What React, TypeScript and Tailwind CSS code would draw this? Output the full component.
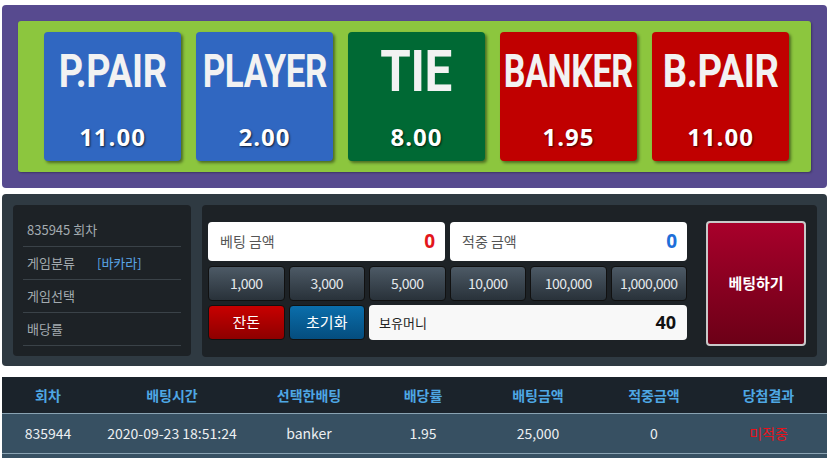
import React from "react";

type Bet = {
  name: string;
  odds: string;
  bg: string;
  size: string;
  squeeze: string;
};

const bets: Bet[] = [
  { name: "P.PAIR", odds: "11.00", bg: "bg-[#3067c1]", size: "text-[46px]", squeeze: "scale-x-[0.82]" },
  { name: "PLAYER", odds: "2.00", bg: "bg-[#3067c1]", size: "text-[46px]", squeeze: "scale-x-[0.76]" },
  { name: "TIE", odds: "8.00", bg: "bg-[#006934]", size: "text-[58px]", squeeze: "scale-x-[0.85]" },
  { name: "BANKER", odds: "1.95", bg: "bg-[#c00000]", size: "text-[46px]", squeeze: "scale-x-[0.74]" },
  { name: "B.PAIR", odds: "11.00", bg: "bg-[#c00000]", size: "text-[46px]", squeeze: "scale-x-[0.83]" },
];

const chips = ["1,000", "3,000", "5,000", "10,000", "100,000", "1,000,000"];

const infoRows: { label: string; value?: string }[] = [
  { label: "835945 회차" },
  { label: "게임분류", value: "[바카라]" },
  { label: "게임선택" },
  { label: "배당률" },
];

const headers = ["회차", "배팅시간", "선택한배팅", "배당률", "배팅금액", "적중금액", "당첨결과"];

const kr = "font-['Noto_Sans_CJK_KR','Noto_Sans',sans-serif]";

function BetCard({ bet }: { bet: Bet }) {
  return (
    <button
      type="button"
      className={`${bet.bg} flex h-[129px] w-[137px] flex-col items-center rounded-[4px] shadow-[2px_2px_3px_rgba(0,0,0,0.45)]`}
    >
      <div className="mt-[2px] flex h-[74px] items-center justify-center">
        <span
          className={`inline-block ${bet.squeeze} ${bet.size} font-['Roboto',sans-serif] font-bold leading-none tracking-[-0.5px] text-[#f2f2f2]`}
        >
          {bet.name}
        </span>
      </div>
      <span className="mt-[17px] font-['Open_Sans',sans-serif] text-[24px] font-bold leading-none tracking-[1px] text-white [text-shadow:1px_1px_2px_rgba(0,0,0,0.7)]">
        {bet.odds}
      </span>
    </button>
  );
}

export default function App() {
  return (
    <div className={`min-h-[458px] bg-white pt-[5px] ${kr}`}>
      {/* bet choices */}
      <div className="ml-[2px] w-[825px] rounded-[4px] bg-[#574a8f] p-[16px]">
        <div className="flex h-[151px] items-center gap-[15px] rounded-[3px] bg-[#8cc63e] pl-[26px] shadow-[1px_1px_2px_rgba(0,0,0,0.3)]">
          {bets.map((b) => (
            <BetCard key={b.name} bet={b} />
          ))}
        </div>
      </div>

      {/* betting panel */}
      <div className="ml-[2px] mt-[6px] flex w-[825px] gap-[11px] rounded-[4px] bg-[#2f3a42] pb-[9px] pl-[11px] pr-[10px] pt-[11px]">
        <div className="h-[151px] w-[178px] rounded-[4px] bg-[#1d2226] px-[10px] pt-[9px]">
          {infoRows.map((r) => (
            <div
              key={r.label}
              className="flex h-[33px] items-center whitespace-nowrap border-b border-[#3a4248] pl-[4px] text-[13px] text-[#a3abb0]"
            >
              <span className={r.value ? "w-[70px]" : ""}>{r.label}</span>
              {r.value && <span className="text-[#5aa5e6]">{r.value}</span>}
            </div>
          ))}
        </div>

        <div className="flex h-[152px] flex-1 items-start rounded-[4px] bg-[#1d2226] pl-[6px] pt-[16px]">
          <div className="flex w-[479px] flex-col">
            <div className="mt-[1px] flex gap-[5px]">
              <div className="flex h-[39px] flex-1 items-center justify-between rounded-[4px] bg-white pl-[12px] pr-[10px]">
                <span className="text-[14px] text-[#555]">베팅 금액</span>
                <span className="font-['Open_Sans',sans-serif] text-[19px] font-bold text-[#e3161b]">0</span>
              </div>
              <div className="flex h-[39px] flex-1 items-center justify-between rounded-[4px] bg-white pl-[12px] pr-[10px]">
                <span className="text-[14px] text-[#555]">적중 금액</span>
                <span className="font-['Open_Sans',sans-serif] text-[19px] font-bold text-[#1e6fd9]">0</span>
              </div>
            </div>
            <div className="mt-[5px] grid grid-cols-6 gap-[4px]">
              {chips.map((c) => (
                <button
                  key={c}
                  type="button"
                  className="h-[35px] rounded-[4px] border border-[#111] bg-gradient-to-b from-[#4d5a66] to-[#29323a] text-[14px] tracking-[-0.5px] text-[#e4e8eb]"
                >
                  {c}
                </button>
              ))}
            </div>
            <div className="mt-[4px] grid grid-cols-6 gap-[4px]">
              <button
                type="button"
                className="h-[35px] rounded-[4px] border border-[#111] bg-gradient-to-b from-[#c80000] to-[#8e0000] text-[15px] text-white"
              >
                잔돈
              </button>
              <button
                type="button"
                className="h-[35px] rounded-[4px] border border-[#111] bg-gradient-to-b from-[#0b6eab] to-[#054d7e] text-[15px] text-white"
              >
                초기화
              </button>
              <div className="col-span-4 flex h-[35px] items-center justify-between rounded-[4px] bg-[#f8f8f8] pl-[10px] pr-[11px]">
                <span className="text-[13px] text-[#222]">보유머니</span>
                <span className="font-['Open_Sans',sans-serif] text-[18px] font-bold text-[#111]">40</span>
              </div>
            </div>
          </div>

          <button
            type="button"
            className="ml-[19px] flex h-[125px] w-[100px] items-center justify-center rounded-[4px] border-2 border-[#c9c9c9] bg-gradient-to-b from-[#a8002b] to-[#6c0017] text-[15px] font-bold text-white"
          >
            베팅하기
          </button>
        </div>
      </div>

      {/* history */}
      <div className="ml-[2px] mt-[11px] w-[825px]">
        <div className="grid h-[36px] grid-cols-[92px_156px_118px_110px_120px_112px_1fr] items-center bg-[#1b232b] text-[14px] font-bold text-[#4ea7e4]">
          {headers.map((h) => (
            <div key={h} className="text-center">
              {h}
            </div>
          ))}
        </div>
        <div className="grid h-[41px] grid-cols-[92px_156px_118px_110px_120px_112px_1fr] items-center border-y border-[#8aa3b3] bg-[#375062] text-[14px] text-[#eceff1]">
          <div className="text-center">835944</div>
          <div className="text-center">2020-09-23 18:51:24</div>
          <div className="text-center">banker</div>
          <div className="text-center">1.95</div>
          <div className="text-center">25,000</div>
          <div className="text-center">0</div>
          <div className="text-center text-[#e8131b]">미적중</div>
        </div>
        <div className="h-[6px] bg-[#375062]" />
      </div>
    </div>
  );
}
